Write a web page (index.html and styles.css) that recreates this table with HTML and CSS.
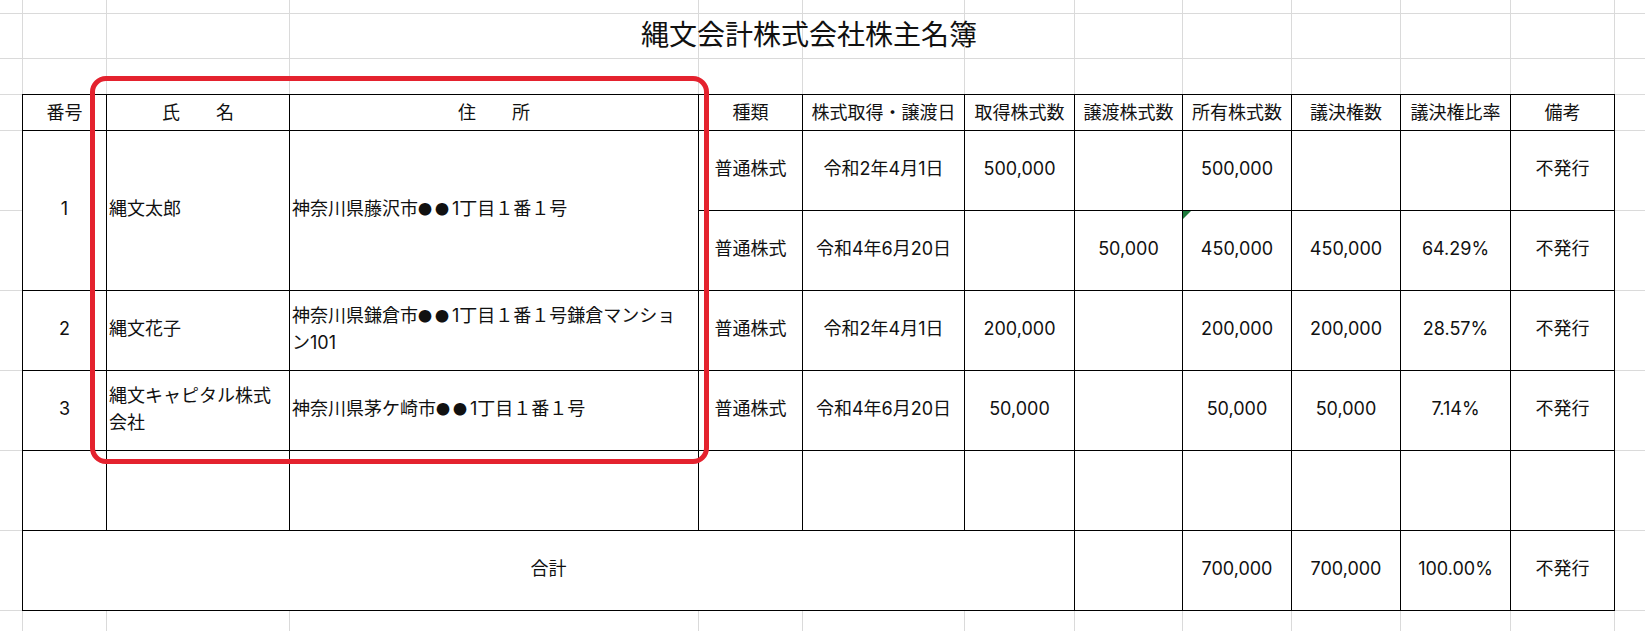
FILE: index.html
```html
<!DOCTYPE html>
<html lang="ja">
<head>
<meta charset="utf-8">
<title>縄文会計株式会社株主名簿</title>
<link rel="stylesheet" href="styles.css">
</head>
<body>
<div class="sheet">
  <h1 class="title">縄文会計株式会社株主名簿</h1>
  <div class="register">
    <div class="cell head">番号</div>
    <div class="cell head">氏　　名</div>
    <div class="cell head">住　　所</div>
    <div class="cell head">種類</div>
    <div class="cell head">株式取得・譲渡日</div>
    <div class="cell head">取得株式数</div>
    <div class="cell head">譲渡株式数</div>
    <div class="cell head">所有株式数</div>
    <div class="cell head">議決権数</div>
    <div class="cell head">議決権比率</div>
    <div class="cell head">備考</div>

    <div class="cell span2">1</div>
    <div class="cell left span2">縄文太郎</div>
    <div class="cell left span2"><span>神奈川県藤沢市<span class="mark">●●</span>1丁目１番１号</span></div>
    <div class="cell">普通株式</div>
    <div class="cell">令和2年4月1日</div>
    <div class="cell">500,000</div>
    <div class="cell"></div>
    <div class="cell">500,000</div>
    <div class="cell"></div>
    <div class="cell"></div>
    <div class="cell">不発行</div>

    <div class="cell">普通株式</div>
    <div class="cell">令和4年6月20日</div>
    <div class="cell"></div>
    <div class="cell">50,000</div>
    <div class="cell flagged">450,000</div>
    <div class="cell">450,000</div>
    <div class="cell">64.29%</div>
    <div class="cell">不発行</div>

    <div class="cell">2</div>
    <div class="cell left">縄文花子</div>
    <div class="cell left multi"><span>神奈川県鎌倉市<span class="mark">●●</span>1丁目１番１号鎌倉マンショ<br>ン101</span></div>
    <div class="cell">普通株式</div>
    <div class="cell">令和2年4月1日</div>
    <div class="cell">200,000</div>
    <div class="cell"></div>
    <div class="cell">200,000</div>
    <div class="cell">200,000</div>
    <div class="cell">28.57%</div>
    <div class="cell">不発行</div>

    <div class="cell">3</div>
    <div class="cell left multi"><span>縄文キャピタル株式<br>会社</span></div>
    <div class="cell left"><span>神奈川県茅ケ崎市<span class="mark">●●</span>1丁目１番１号</span></div>
    <div class="cell">普通株式</div>
    <div class="cell">令和4年6月20日</div>
    <div class="cell">50,000</div>
    <div class="cell"></div>
    <div class="cell">50,000</div>
    <div class="cell">50,000</div>
    <div class="cell">7.14%</div>
    <div class="cell">不発行</div>

    <div class="cell"></div>
    <div class="cell"></div>
    <div class="cell"></div>
    <div class="cell"></div>
    <div class="cell"></div>
    <div class="cell"></div>
    <div class="cell"></div>
    <div class="cell"></div>
    <div class="cell"></div>
    <div class="cell"></div>
    <div class="cell"></div>

    <div class="cell total">合計</div>
    <div class="cell"></div>
    <div class="cell">700,000</div>
    <div class="cell">700,000</div>
    <div class="cell">100.00%</div>
    <div class="cell">不発行</div>
  </div>
  <div class="highlight"></div>
</div>
</body>
</html>
```

FILE: styles.css
```css
html, body {
  margin: 0;
  padding: 0;
  background: #fff;
}

.sheet {
  position: relative;
  width: 1645px;
  height: 631px;
  overflow: hidden;
  font-family: "Inter", "Noto Sans CJK JP", sans-serif;
  color: #111;
  background-color: #fff;
  background-image:
    linear-gradient(#dadada, #dadada),
    linear-gradient(#dadada, #dadada),
    linear-gradient(#dadada, #dadada),
    linear-gradient(#dadada, #dadada),
    linear-gradient(#dadada, #dadada),
    linear-gradient(#dadada, #dadada),
    linear-gradient(#dadada, #dadada),
    linear-gradient(#dadada, #dadada),
    linear-gradient(#dadada, #dadada),
    linear-gradient(#dadada, #dadada),
    linear-gradient(#dadada, #dadada),
    linear-gradient(#dadada, #dadada),
    linear-gradient(#dadada, #dadada),
    linear-gradient(#dadada, #dadada),
    linear-gradient(#dadada, #dadada),
    linear-gradient(#dadada, #dadada),
    linear-gradient(#dadada, #dadada),
    linear-gradient(#dadada, #dadada),
    linear-gradient(#dadada, #dadada),
    linear-gradient(#dadada, #dadada),
    linear-gradient(#dadada, #dadada),
    linear-gradient(#dadada, #dadada);
  background-repeat: no-repeat;
  background-size:
    1px 100%, 1px 100%, 1px 100%, 1px 100%, 1px 100%, 1px 100%,
    1px 100%, 1px 100%, 1px 100%, 1px 100%, 1px 100%, 1px 100%,
    100% 1px, 100% 1px, 100% 1px, 100% 1px, 100% 1px,
    100% 1px, 100% 1px, 100% 1px, 100% 1px, 100% 1px;
  background-position:
    22px 0, 106px 0, 289px 0, 698px 0, 802px 0, 964px 0,
    1074px 0, 1182px 0, 1291px 0, 1400px 0, 1510px 0, 1614px 0,
    0 13px, 0 58px, 0 94px, 0 130px, 0 210px,
    0 290px, 0 370px, 0 450px, 0 530px, 0 610px;
}

.title {
  margin: 13px 0 0 0;
  width: 1618px;
  height: 45px;
  line-height: 41px;
  text-align: center;
  font-family: "Noto Sans CJK JP", sans-serif;
  font-size: 28px;
  font-weight: 400;
  color: #111;
}

.register {
  display: grid;
  grid-template-columns: 83px 182px 408px 103px 161px 109px 107px 108px 108px 109px 103px;
  grid-template-rows: 35px repeat(6, 79px);
  gap: 1px;
  padding: 1px;
  margin: 36px 0 0 22px;
  width: max-content;
  background: #000;
  font-size: 18px;
}

.cell {
  position: relative;
  display: flex;
  align-items: center;
  justify-content: center;
  padding-bottom: 4px;
  background: #fff;
  white-space: nowrap;
  line-height: 1;
}

.cell.head {
  padding-bottom: 0;
}

.cell.left {
  justify-content: flex-start;
  padding-left: 2px;
}

.cell.multi {
  line-height: 27px;
}

.cell.span2 {
  grid-row: span 2;
}

.cell.total {
  grid-column: span 6;
}

.mark {
  font-family: "Noto Sans CJK JP", sans-serif;
  font-size: 14px;
  letter-spacing: 3px;
  vertical-align: 1px;
}

.cell.flagged::before {
  content: "";
  position: absolute;
  top: 0;
  left: 0;
  width: 0;
  height: 0;
  border-top: 8px solid #1e7b3c;
  border-right: 8px solid transparent;
}

.highlight {
  position: absolute;
  left: 90px;
  top: 76px;
  width: 619px;
  height: 388px;
  box-sizing: border-box;
  border: 5px solid #e4222e;
  border-radius: 16px;
  pointer-events: none;
}
```
